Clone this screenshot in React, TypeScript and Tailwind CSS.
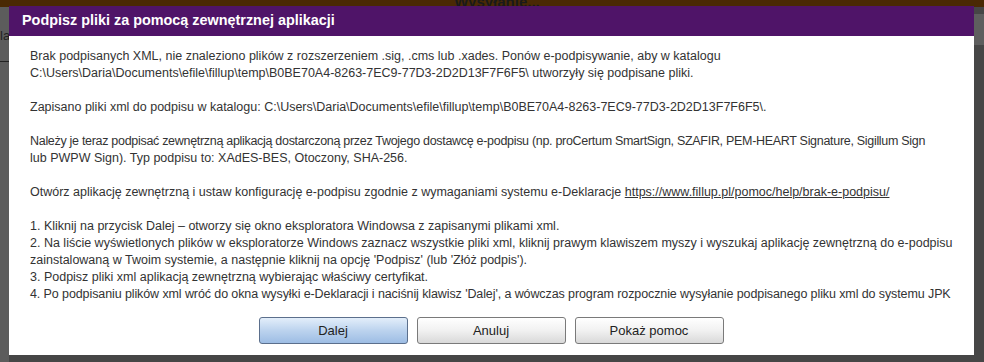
import React from "react";

const font = { fontFamily: '"Liberation Sans", Arial, sans-serif' };

const Button = ({ label, primary }: { label: string; primary?: boolean }) => (
    <button
        className={`w-[149px] h-[27px] rounded-[3px] border text-[13px] text-[#222] ${
            primary
                ? "border-[#5b6f8c] bg-gradient-to-b from-[#e3eefa] via-[#bcd3ee] to-[#9dbde4]"
                : "border-[#7a7a7a] bg-gradient-to-b from-[#ffffff] via-[#f1f1f1] to-[#d9d9d9]"
        }`}
    >
        {label}
    </button>
);

const Line = ({ children, className = "" }: { children?: React.ReactNode; className?: string }) => (
    <div className={`whitespace-nowrap h-[17px] ${className}`}>{children}</div>
);

export default function App() {
    return (
        <div className="relative w-[984px] h-[362px] overflow-hidden bg-[#464646]" style={font}>
            {/* page behind the modal */}
            <div className="h-[7px] bg-[#4a2904] overflow-hidden flex justify-center">
                <span className="-mt-[9px] ml-[10px] text-[15px] font-bold text-[#1a1a1a]">Wysyłanie...</span>
            </div>
            <div className="flex h-[355px]">
                <div className="w-[9px] bg-[#5c5c5c] overflow-hidden">
                    <div className="mt-[19px] text-[13px] text-[#222]">la</div>
                    <div className="mt-[15px] h-px w-[9px] bg-[#222]" />
                </div>
                <div className="flex-1" />
                <div className="w-[10px] flex flex-col">
                    <div className="mt-[7px] h-[31px] bg-[#5e5e5e]" />
                </div>
            </div>

            {/* modal */}
            <div className="absolute left-[9px] top-[6px] w-[965px] h-[349px] flex flex-col bg-white">
                <div className="h-[30px] shrink-0 bg-[#4f1468] flex items-center px-[13px]">
                    <h1 className="text-[14.4px] font-bold text-white">Podpisz pliki za pomocą zewnętrznej aplikacji</h1>
                </div>
                <div className="flex-1 flex flex-col px-[21px] pt-[12px]">
                    <div className="text-[12.5px] leading-[17px] text-[#333]">
                        <Line>
                            Brak podpisanych XML, nie znaleziono plików z rozszerzeniem .sig, .cms lub .xades. Ponów e-podpisywanie, aby w katalogu
                        </Line>
                        <Line>C:\Users\Daria\Documents\efile\fillup\temp\B0BE70A4-8263-7EC9-77D3-2D2D13F7F6F5\ utworzyły się podpisane pliki.</Line>
                        <Line />
                        <Line>Zapisano pliki xml do podpisu w katalogu: C:\Users\Daria\Documents\efile\fillup\temp\B0BE70A4-8263-7EC9-77D3-2D2D13F7F6F5\.</Line>
                        <Line />
                        <Line className="tracking-[-0.3px]">
                            Należy je teraz podpisać zewnętrzną aplikacją dostarczoną przez Twojego dostawcę e-podpisu (np. proCertum SmartSign, SZAFIR, PEM-HEART Signature, Sigillum Sign
                        </Line>
                        <Line>lub PWPW Sign). Typ podpisu to: XAdES-BES, Otoczony, SHA-256.</Line>
                        <Line />
                        <Line>
                            Otwórz aplikację zewnętrzną i ustaw konfigurację e-podpisu zgodnie z wymaganiami systemu e-Deklaracje{" "}
                            <a className="underline">https://www.fillup.pl/pomoc/help/brak-e-podpisu/</a>
                        </Line>
                        <Line />
                        <Line>1. Kliknij na przycisk Dalej – otworzy się okno eksploratora Windowsa z zapisanymi plikami xml.</Line>
                        <Line>
                            2. Na liście wyświetlonych plików w eksploratorze Windows zaznacz wszystkie pliki xml, kliknij prawym klawiszem myszy i wyszukaj aplikację zewnętrzną do e-podpisu
                        </Line>
                        <Line>zainstalowaną w Twoim systemie, a następnie kliknij na opcję 'Podpisz' (lub 'Złóż podpis').</Line>
                        <Line>3. Podpisz pliki xml aplikacją zewnętrzną wybierając właściwy certyfikat.</Line>
                        <Line className="tracking-[-0.1px]">
                            4. Po podpisaniu plików xml wróć do okna wysyłki e-Deklaracji i naciśnij klawisz 'Dalej', a wówczas program rozpocznie wysyłanie podpisanego pliku xml do systemu JPK
                        </Line>
                    </div>
                    <div className="mt-[14px] flex justify-center gap-[9px] pr-[1px]">
                        <Button label="Dalej" primary />
                        <Button label="Anuluj" />
                        <Button label="Pokaż pomoc" />
                    </div>
                </div>
            </div>
        </div>
    );
}
